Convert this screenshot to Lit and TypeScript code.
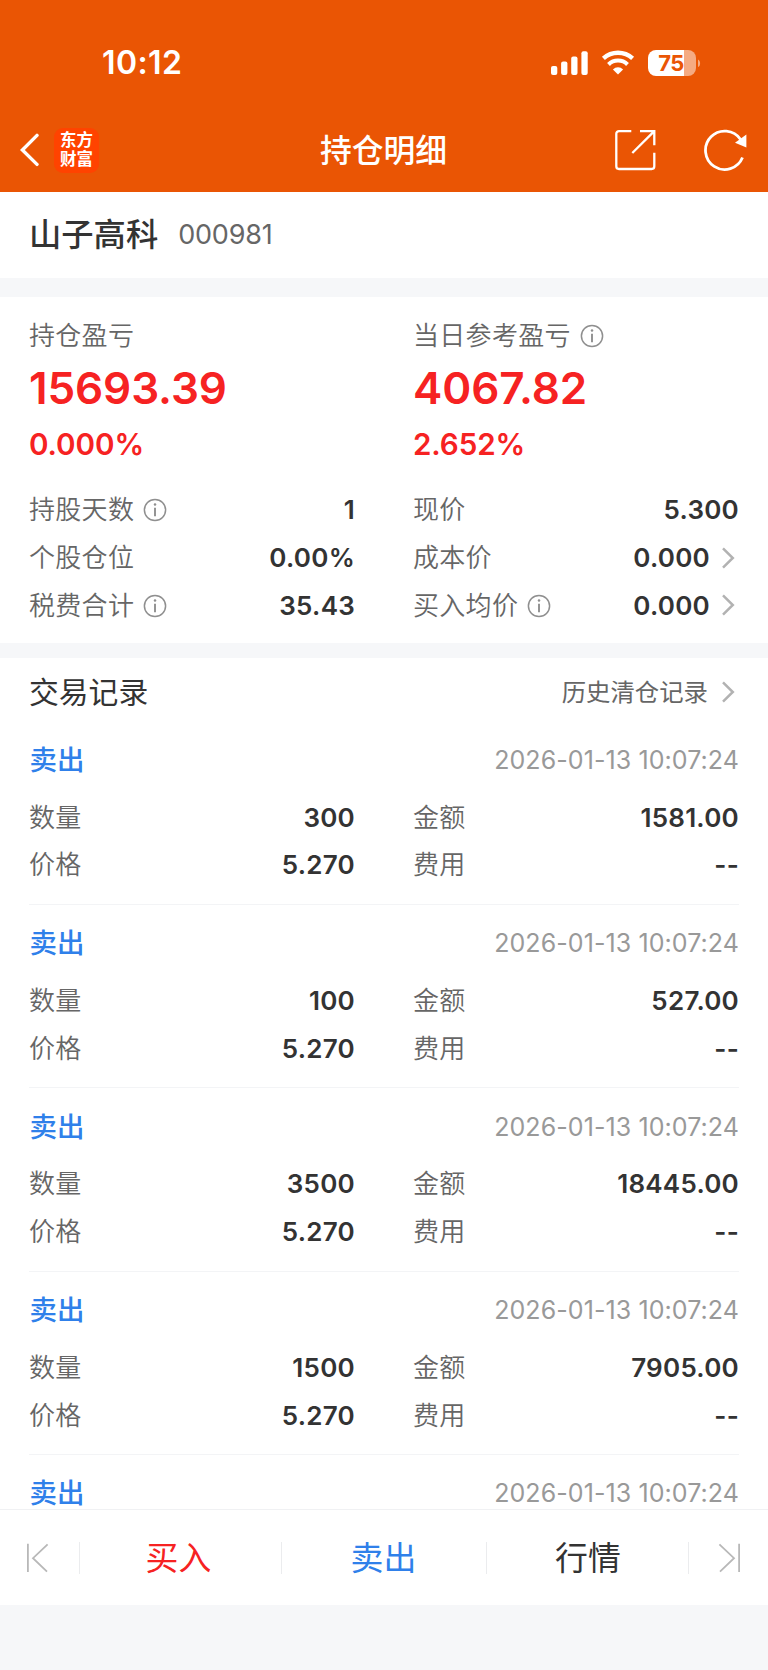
import { LitElement, html, css, nothing } from "lit";
import { customElement, property } from "lit/decorators.js";

interface Trade {
  qty: string;
  amount: string;
}

const TRADES: Array<Trade | null> = [
  { qty: "300", amount: "1581.00" },
  { qty: "100", amount: "527.00" },
  { qty: "3500", amount: "18445.00" },
  { qty: "1500", amount: "7905.00" },
  null,
];

const infoIcon = html`<svg class="info" width="24" height="24" viewBox="0 0 24 24" fill="none" stroke="#8f8f8f">
  <circle cx="12" cy="12" r="10.6" stroke-width="1.5" />
  <path d="M12 9.7V18.2" stroke-width="1.9" />
  <circle cx="12" cy="6.6" r="1.25" fill="#8f8f8f" stroke="none" />
</svg>`;

const chevron = html`<svg class="chevron" width="14" height="22" viewBox="0 0 14 22" fill="none">
  <path d="M2 1.4L11.8 11L2 20.6" stroke="#b2b2b2" stroke-width="2.5" />
</svg>`;

@customElement("field-row")
export class FieldRow extends LitElement {
  @property() label = "";
  @property() value = "";
  @property({ type: Boolean }) info = false;
  @property({ type: Boolean }) link = false;

  static styles = css`
    :host {
      display: flex;
      align-items: center;
      height: 47.8px;
      line-height: 48px;
      font-size: 26px;
      color: #666;
    }
    .label {
      flex: 1;
      display: flex;
      align-items: center;
      letter-spacing: 0.3px;
      font-weight: 350;
    }
    .info {
      margin-left: 9px;
    }
    .value {
      color: #333;
      font-weight: 600;
      letter-spacing: 0.25px;
    }
    .chevron {
      margin: 0 4px 0 11px;
    }
  `;

  render() {
    return html`<span class="label">${this.label}${this.info ? infoIcon : nothing}</span>
      <span class="value">${this.value}</span>${this.link ? chevron : nothing}`;
  }
}

@customElement("trade-record")
export class TradeRecord extends LitElement {
  @property({ attribute: false }) trade: Trade | null = null;

  static styles = css`
    :host {
      display: block;
      height: 183.4px;
      flex: none;
      box-sizing: border-box;
      border-bottom: 1.4px solid #f3f4f6;
    }
    :host(:last-child) {
      height: auto;
      border-bottom: none;
    }
    .top {
      display: flex;
      justify-content: space-between;
      align-items: center;
      height: 36px;
      line-height: 36px;
      padding-top: 20.5px;
    }
    .side {
      color: #2f80ea;
      font-size: 27.5px;
      font-weight: 500;
      padding-left: 0.5px;
    }
    .time {
      color: #999;
      font-size: 25px;
      letter-spacing: 0.08px;
    }
    .grid {
      display: grid;
      grid-template-columns: 1fr 1fr;
      column-gap: 58px;
      margin-top: 15.8px;
    }
  `;

  render() {
    const t = this.trade;
    return html`<div class="top"><span class="side">卖出</span><span class="time">2026-01-13 10:07:24</span></div>
      ${t
        ? html`<div class="grid">
            <field-row label="数量" value=${t.qty}></field-row>
            <field-row label="金额" value=${t.amount}></field-row>
            <field-row label="价格" value="5.270"></field-row>
            <field-row label="费用" value="--"></field-row>
          </div>`
        : nothing}`;
  }
}

@customElement("app-root")
export class AppRoot extends LitElement {
  static styles = css`
    :host {
      display: flex;
      flex-direction: column;
      width: 768px;
      height: 1670px;
      overflow: hidden;
      background: #f6f7f9;
      color: #333;
      font-family: Inter, "Noto Sans CJK SC", sans-serif;
    }
    .head {
      background: #ea5504;
      color: #fff;
      height: 192px;
      flex: none;
    }
    .status {
      display: flex;
      justify-content: space-between;
      align-items: center;
      height: 108px;
      box-sizing: border-box;
      padding: 17px 67px 0 102px;
    }
    .clock {
      font-size: 32px;
      font-weight: 600;
      letter-spacing: 0.4px;
    }
    .nav {
      display: grid;
      grid-template-columns: 1fr auto 1fr;
      align-items: center;
      height: 84px;
    }
    .left {
      display: flex;
      align-items: center;
      padding-left: 19px;
      gap: 15px;
    }
    .logo {
      width: 45px;
      height: 45px;
      box-sizing: border-box;
      padding-top: 3.5px;
      border-radius: 9px;
      background: #ff4300;
      font-size: 16.5px;
      font-weight: 700;
      line-height: 19px;
      text-align: center;
    }
    .title {
      font-size: 31.8px;
      font-weight: 500;
      line-height: 44px;
      margin-right: 1px;
      padding-top: 1.5px;
    }
    .right {
      display: flex;
      justify-content: flex-end;
      align-items: center;
      gap: 47px;
      padding-right: 19px;
    }
    .stock {
      height: 86px;
      flex: none;
      background: #fff;
      display: flex;
      align-items: center;
      padding-left: 29px;
      gap: 20px;
      line-height: 44px;
    }
    .name {
      font-size: 32.3px;
      font-weight: 500;
    }
    .code {
      font-size: 27px;
      color: #666;
      letter-spacing: -0.2px;
      margin-top: -1px;
    }
    .summary {
      margin-top: 19px;
      height: 346px;
      flex: none;
      box-sizing: border-box;
      background: #fff;
      padding: 17px 29px 0;
      display: grid;
      grid-template-columns: 1fr 1fr;
      column-gap: 58px;
      align-content: start;
    }
    .caption {
      display: flex;
      align-items: center;
      height: 43px;
      line-height: 44px;
      color: #666;
      font-size: 26px;
      font-weight: 350;
      letter-spacing: 0.3px;
    }
    .info {
      margin-left: 9px;
    }
    .big {
      color: #f62222;
      font-size: 44px;
      font-weight: 600;
      line-height: 62px;
      letter-spacing: -0.1px;
    }
    .pct {
      color: #f62222;
      font-size: 29.6px;
      font-weight: 600;
      line-height: 50px;
      letter-spacing: -0.1px;
      margin-bottom: 17px;
    }
    .records {
      margin-top: 15px;
      flex: 1;
      min-height: 0;
      overflow: hidden;
      background: #fff;
      padding: 0 29px;
      display: flex;
      flex-direction: column;
    }
    .rechead {
      flex: none;
      display: flex;
      align-items: center;
      height: 63.4px;
      padding-top: 5px;
      box-sizing: border-box;
      line-height: 40px;
    }
    .rectitle {
      flex: 1;
      font-size: 29.8px;
    }
    .history {
      display: flex;
      align-items: center;
      color: #666;
      font-size: 24.4px;
    }
    .chevron {
      margin: 0 4px 0 13px;
    }
    .tabs {
      height: 96px;
      box-sizing: border-box;
      border-top: 1px solid #f0f1f3;
      flex: none;
      background: #fff;
      display: grid;
      grid-template-columns: 80px 202px 205px 202px 79px;
      align-items: center;
      margin-bottom: 65px;
      font-size: 32.9px;
      line-height: 46px;
    }
    .tab {
      height: 48px;
      display: flex;
      align-items: center;
      justify-content: center;
      background: linear-gradient(#ebecee, #ebecee) right center / 1.4px 32px no-repeat;
    }
    .tab.last {
      background: none;
    }
    .prev {
      padding-right: 4px;
    }
    .buy {
      color: #f62222;
      padding-right: 5px;
    }
    .sell {
      color: #2f80ea;
      padding-right: 2px;
    }
  `;

  render() {
    return html`
      <header class="head">
        <div class="status">
          <span class="clock">10:12</span>
          <svg width="150" height="28" viewBox="0 0 150 28" fill="#fff">
            <rect x="0" y="17" width="6.3" height="9" rx="2" />
            <rect x="10.1" y="12.6" width="6.3" height="13.4" rx="2" />
            <rect x="20.2" y="7.6" width="6.3" height="18.4" rx="2" />
            <rect x="30.4" y="2.2" width="6.3" height="23.8" rx="2" />
            <g fill="none" stroke="#fff">
              <path d="M52.4 9.3A21.8 21.8 0 0 1 81.6 9.3" stroke-width="4.4" />
              <path d="M57.5 15.4A13.7 13.7 0 0 1 76.5 15.4" stroke-width="4.1" />
            </g>
            <path d="M67 25.6L61.9 20.4A7.4 7.4 0 0 1 72.1 20.4Z" />
            <path d="M105 1H133V27H105A8 8 0 0 1 97 19V9A8 8 0 0 1 105 1Z" />
            <path d="M133 1H137A8 8 0 0 1 145 9V19A8 8 0 0 1 137 27H133Z" opacity=".5" />
            <path d="M147 10.4C149.8 11.6 149.8 17 147 18Z" opacity=".5" />
            <text x="120" y="22" text-anchor="middle" font-size="22" font-weight="700" letter-spacing="-.5" fill="#ea5504">75</text>
          </svg>
        </div>
        <div class="nav">
          <div class="left">
            <svg width="20" height="34" viewBox="0 0 20 34" fill="none" stroke="#fff" stroke-width="3.4" stroke-linecap="round">
              <path d="M18 2.4L3.4 17L18 31.4" />
            </svg>
            <div class="logo">东方<br />财富</div>
          </div>
          <div class="title">持仓明细</div>
          <div class="right">
            <svg width="41" height="42" viewBox="0 0 41 42" fill="none" stroke="#fff" stroke-width="2.3">
              <path d="M16.3 2.1H4A2.7 2.7 0 0 0 1.3 4.8V37.3A2.7 2.7 0 0 0 4 40H36.6A2.7 2.7 0 0 0 39.3 37.3V23.8" />
              <path d="M25 2.1H39.3V16.3M39.3 2.1L17.3 24" />
            </svg>
            <svg width="46" height="42" viewBox="0 0 46 42" fill="none">
              <path d="M39.5 28.5A19.2 19.2 0 1 1 37.6 10.5" stroke="#fff" stroke-width="2.8" />
              <path d="M43.4 5.6V18.4L32 13.8Z" fill="#fff" />
            </svg>
          </div>
        </div>
      </header>
      <section class="stock"><span class="name">山子高科</span><span class="code">000981</span></section>
      <section class="summary">
        <div class="caption">持仓盈亏</div>
        <div class="caption">当日参考盈亏${infoIcon}</div>
        <div class="big">15693.39</div>
        <div class="big">4067.82</div>
        <div class="pct">0.000%</div>
        <div class="pct">2.652%</div>
        <field-row label="持股天数" value="1" info></field-row>
        <field-row label="现价" value="5.300"></field-row>
        <field-row label="个股仓位" value="0.00%"></field-row>
        <field-row label="成本价" value="0.000" link></field-row>
        <field-row label="税费合计" value="35.43" info></field-row>
        <field-row label="买入均价" value="0.000" info link></field-row>
      </section>
      <section class="records">
        <div class="rechead">
          <span class="rectitle">交易记录</span>
          <span class="history">历史清仓记录${chevron}</span>
        </div>
        ${TRADES.map((t) => html`<trade-record .trade=${t}></trade-record>`)}
      </section>
      <nav class="tabs">
        <div class="tab prev">
          <svg width="24" height="30" viewBox="0 0 24 30" fill="none" stroke="#b8b8b8" stroke-width="1.8">
            <path d="M1.9 .8V29M21.6 1.3L7 15.2L21 28.6" />
          </svg>
        </div>
        <div class="tab buy">买入</div>
        <div class="tab sell">卖出</div>
        <div class="tab">行情</div>
        <div class="tab last">
          <svg width="24" height="30" viewBox="0 0 24 30" fill="none" stroke="#b8b8b8" stroke-width="1.8">
            <path d="M22.1 .8V29M2.4 1.3L17 15.2L3 28.6" />
          </svg>
        </div>
      </nav>
    `;
  }
}
